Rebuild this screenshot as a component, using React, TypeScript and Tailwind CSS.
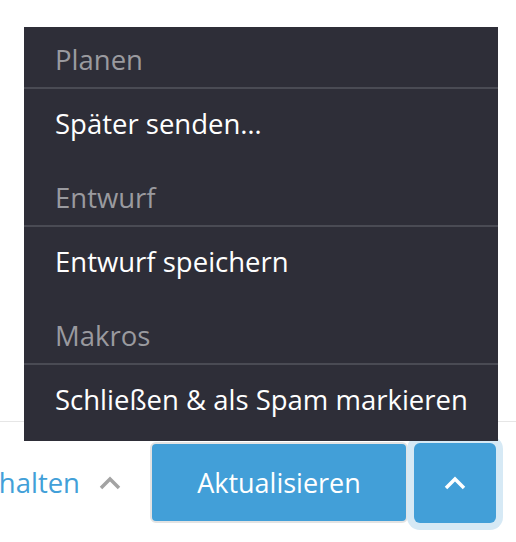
const menu = [
  { header: "Planen", item: "Später senden…" },
  { header: "Entwurf", item: "Entwurf speichern" },
  { header: "Makros", item: "Schließen & als Spam markieren" },
];

function ChevronUp({ className }: { className: string }) {
  return (
    <svg viewBox="0 0 22 14" className={className} fill="none">
      <path d="M2 12 L11 3 L20 12" stroke="currentColor" strokeWidth="3.5" />
    </svg>
  );
}

export default function App() {
  return (
    <div className="relative h-[542px] w-[516px] overflow-hidden bg-white font-['Open_Sans',sans-serif]">
      <div className="h-[421px]" />

      {/* bottom bar */}
      <div className="flex items-center justify-end border-t border-[#e6e6e6] pt-[20px] pr-[20px]">
        <span className="shrink-0 whitespace-nowrap text-[27.5px] leading-[30px] text-[#429fd8]">
          Status beibehalten
        </span>
        <ChevronUp className="ml-[19px] h-[14px] w-[22px] shrink-0 text-[#a3a3a3]" />
        <button className="ml-[29px] flex h-[81px] w-[258px] shrink-0 items-center justify-center rounded-[6px] border-2 border-[#e3e3e3] bg-[#429fd8] pt-[2px] text-[27px] font-medium text-white">
          Aktualisieren
        </button>
        <button className="ml-[6px] flex h-[80px] w-[82px] shrink-0 items-center justify-center rounded-[6px] bg-[#429fd8] text-white shadow-[0_0_0_7px_#d6e9f5]">
          <ChevronUp className="h-[14px] w-[22px]" />
        </button>
      </div>

      {/* dropdown menu */}
      <div className="absolute left-[24px] top-[27px] w-[474px] bg-[#2e2e38] text-[27.5px] leading-[30px]">
        {menu.map((m, i) => (
          <div key={i}>
            <div className="whitespace-nowrap pl-[31px] pt-[18px] pb-[12px] text-[#9a9a9f]">{m.header}</div>
            <div className="h-[2px] bg-[#4a4b54]" />
            <div className="whitespace-nowrap pl-[31px] pt-[20px] pb-[26px] text-white">{m.item}</div>
          </div>
        ))}
      </div>
    </div>
  );
}
